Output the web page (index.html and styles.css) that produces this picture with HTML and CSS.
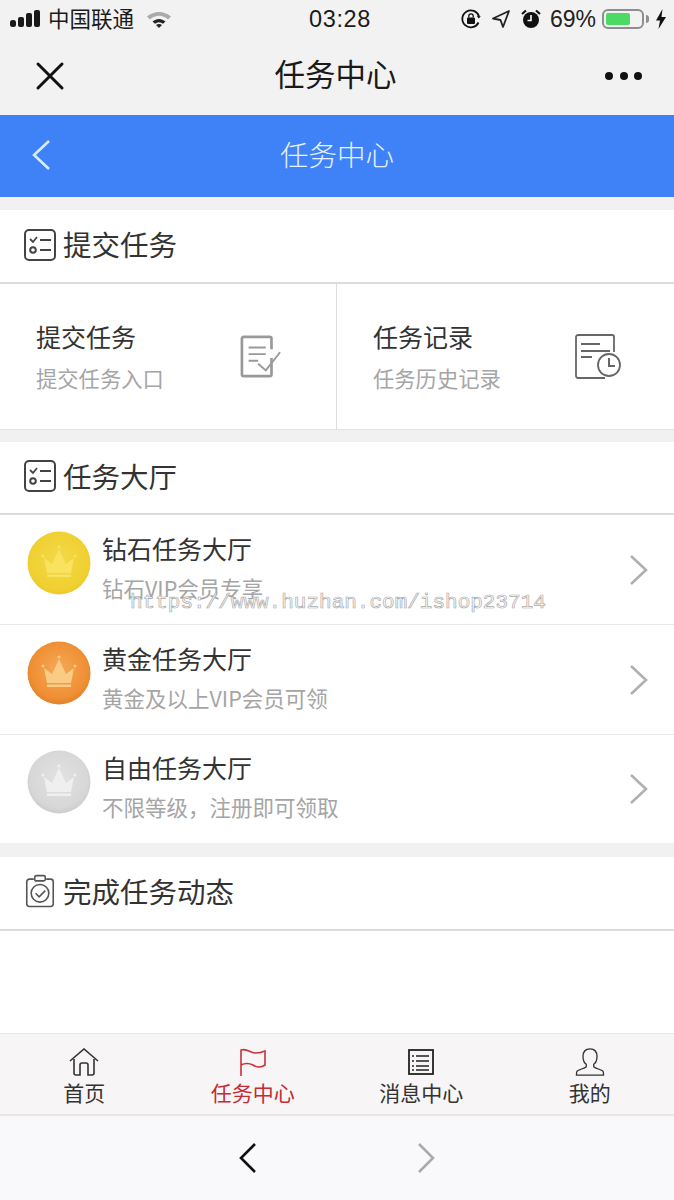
FILE: index.html
```html
<!DOCTYPE html>
<html lang="zh-CN">
<head>
<meta charset="utf-8">
<title>任务中心</title>
<link rel="stylesheet" href="styles.css">
</head>
<body>
<div class="page">
  <header class="chrome">
    <div class="status">
      <div class="status-left">
        <svg class="signal" width="31" height="18" viewBox="0 0 31 18"><rect x="0" y="10" width="6" height="7" rx="2.500"/><rect x="8" y="7" width="6" height="10" rx="2"/><rect x="16" y="3" width="6" height="14" rx="2"/><rect x="24" y="0" width="6" height="17" rx="2"/></svg>
        <span class="carrier">中国联通</span>
        <svg class="wifi" width="26" height="18" viewBox="0 0 26 18"><path d="M1 6.500C8 .5 18 .5 25 6.500l-3 3C16.500 4.500 9.500 4.500 4 9.500z" fill="#aaa"/><path d="M6.500 11.500c4-3.500 9-3.500 13 0l-2.500 2.300c-2.500-2-5.500-2-8 0z" fill="#222"/><path d="M10 15c1.800-1.300 4.200-1.300 6 0l-3 3z" fill="#222"/></svg>
      </div>
      <span class="time">03:28</span>
      <div class="status-right">
        <svg width="22" height="22" viewBox="0 0 22 22" fill="none" stroke="#111" stroke-width="1.800"><path d="M18.500 14.500A8.500 8.500 0 1 1 19 8.500"/><path d="M20.800 8.200l-2 2.300-2-2.400z" fill="#111" stroke="none"/><rect x="7" y="9.500" width="8" height="6.500" rx="1" fill="#111" stroke="none"/><path d="M8.800 9.500V8a2.200 2.200 0 0 1 4.400 0v1.500" stroke-width="1.300"/></svg>
        <svg class="gap-a" width="20" height="20" viewBox="0 0 20 20" fill="none" stroke="#222" stroke-width="1.800" stroke-linejoin="round"><path d="M18 2 2 9.500l7.500 1.500L12 18z"/></svg>
        <svg class="gap-b" width="22" height="22" viewBox="0 0 22 22"><circle cx="11" cy="12" r="8" fill="#111"/><path d="M11 7v5.500H7.500" fill="none" stroke="#fff" stroke-width="1.600"/><path d="M2 6l4-3.500M20 6l-4-3.500" stroke="#111" stroke-width="2.200"/></svg>
        <span class="battery-pct">69%</span>
        <span class="battery"><span class="battery-fill"></span></span>
        <span class="battery-cap"></span>
        <svg width="12" height="20" viewBox="0 0 12 20"><path d="M7.500 0 1 11.500h4L3.500 20 11 8H6.500z" fill="#111"/></svg>
      </div>
    </div>
    <div class="wx-nav">
      <svg class="wx-close" width="30" height="30" viewBox="0 0 30 30"><path d="M3 3l24 24M27 3 3 27" stroke="#111" stroke-width="3" stroke-linecap="round"/></svg>
      <span class="wx-title">任务中心</span>
      <div class="wx-more"><i></i><i></i><i></i></div>
    </div>
  </header>

  <div class="appbar">
    <svg class="appbar-back" width="22" height="32" viewBox="0 0 22 32"><path d="M19 2 4 16l15 14" fill="none" stroke="#d8ecff" stroke-width="2.600"/></svg>
    <span class="appbar-title">任务中心</span>
  </div>

  <section class="section section-a">
    <h2 class="section-head">
      <svg class="head-icon" width="34" height="34" viewBox="0 0 34 34" fill="none" stroke="#444" stroke-width="2"><rect x="2" y="2" width="30" height="30" rx="4"/><path d="M7 11l3 3 4-5" stroke-width="1.800"/><circle cx="10" cy="22" r="2.800"/><path d="M17 12h11M17 22h11"/></svg>
      <span>提交任务</span>
    </h2>
    <div class="cards">
      <a class="card">
        <div class="card-text"><div class="card-title">提交任务</div><div class="card-sub">提交任务入口</div></div>
        <svg class="card-icon" width="42" height="44" viewBox="0 0 44 46" fill="none" stroke="#999" stroke-width="2.800"><path d="M33 24v17a2 2 0 0 1-2 2H4a2 2 0 0 1-2-2V4a2 2 0 0 1 2-2h27a2 2 0 0 1 2 2v11"/><path d="M9 13h18M9 20h18M9 27h10" stroke-width="2"/><path d="M19 30l8 7 15-19" stroke-width="2"/></svg>
      </a>
      <a class="card card-right">
        <div class="card-text"><div class="card-title">任务记录</div><div class="card-sub">任务历史记录</div></div>
        <svg class="card-icon" width="46" height="46" viewBox="0 0 46 46" fill="none" stroke="#666" stroke-width="1.800"><path d="M30 44H3a2 2 0 0 1-2-2V3a2 2 0 0 1 2-2h34a2 2 0 0 1 2 2v15"/><path d="M6 10h19M6 17h29M6 23h11" stroke-width="2"/><circle cx="34" cy="31" r="11"/><path d="M34 24v8h6" stroke-width="2"/></svg>
      </a>
    </div>
  </section>

  <section class="section section-b">
    <h2 class="section-head section-head-tight">
      <svg class="head-icon" width="34" height="34" viewBox="0 0 34 34" fill="none" stroke="#444" stroke-width="2"><rect x="2" y="2" width="30" height="30" rx="4"/><path d="M7 11l3 3 4-5" stroke-width="1.800"/><circle cx="10" cy="22" r="2.800"/><path d="M17 12h11M17 22h11"/></svg>
      <span>任务大厅</span>
    </h2>
    <a class="row">
      <svg class="coin" width="64" height="64" viewBox="0 0 64 64"><defs><radialGradient id="g1" cx=".5" cy=".45" r=".6"><stop offset="0" stop-color="#f3d94a"/><stop offset=".8" stop-color="#f0d030"/><stop offset="1" stop-color="#e8c324"/></radialGradient></defs><circle cx="32" cy="32" r="31.500" fill="url(#g1)"/><path d="M17 27l8 6 7-15 7 15 8-6-3 15H20z" fill="#f8e25e"/><circle cx="32" cy="16" r="1.600" fill="#f8e25e"/><circle cx="16" cy="25" r="1.500" fill="#f8e25e"/><circle cx="48" cy="25" r="1.500" fill="#f8e25e"/><rect x="20" y="43.500" width="24" height="2.500" fill="#f8e25e"/></svg>
      <div class="row-text"><div class="row-title">钻石任务大厅</div><div class="row-sub">钻石VIP会员专享</div></div>
      <svg class="chev" width="22" height="32" viewBox="0 0 22 32"><path d="M3 2l15 14L3 30" fill="none" stroke="#b0b0b0" stroke-width="2.600"/></svg>
    </a>
    <a class="row">
      <svg class="coin" width="64" height="64" viewBox="0 0 64 64"><defs><radialGradient id="g2" cx=".5" cy=".45" r=".6"><stop offset="0" stop-color="#f5a95a"/><stop offset=".75" stop-color="#ef8f33"/><stop offset="1" stop-color="#dd7a20"/></radialGradient></defs><circle cx="32" cy="32" r="31.500" fill="url(#g2)"/><path d="M17 27l8 6 7-15 7 15 8-6-3 15H20z" fill="#f9cb85"/><circle cx="32" cy="16" r="1.600" fill="#f9cb85"/><circle cx="16" cy="25" r="1.500" fill="#f9cb85"/><circle cx="48" cy="25" r="1.500" fill="#f9cb85"/><rect x="20" y="43.500" width="24" height="2.500" fill="#f9cb85"/></svg>
      <div class="row-text"><div class="row-title">黄金任务大厅</div><div class="row-sub">黄金及以上VIP会员可领</div></div>
      <svg class="chev" width="22" height="32" viewBox="0 0 22 32"><path d="M3 2l15 14L3 30" fill="none" stroke="#b0b0b0" stroke-width="2.600"/></svg>
    </a>
    <a class="row row-last">
      <svg class="coin" width="64" height="64" viewBox="0 0 64 64"><defs><radialGradient id="g3" cx=".5" cy=".45" r=".6"><stop offset="0" stop-color="#e2e2e2"/><stop offset=".75" stop-color="#d7d7d7"/><stop offset="1" stop-color="#c8c8c8"/></radialGradient></defs><circle cx="32" cy="32" r="31.500" fill="url(#g3)"/><path d="M17 27l8 6 7-15 7 15 8-6-3 15H20z" fill="#efefef"/><circle cx="32" cy="16" r="1.600" fill="#efefef"/><circle cx="16" cy="25" r="1.500" fill="#efefef"/><circle cx="48" cy="25" r="1.500" fill="#efefef"/><rect x="20" y="43.500" width="24" height="2.500" fill="#efefef"/></svg>
      <div class="row-text"><div class="row-title">自由任务大厅</div><div class="row-sub">不限等级，注册即可领取</div></div>
      <svg class="chev" width="22" height="32" viewBox="0 0 22 32"><path d="M3 2l15 14L3 30" fill="none" stroke="#b0b0b0" stroke-width="2.600"/></svg>
    </a>
  </section>

  <section class="section section-fill">
    <h2 class="section-head">
      <svg class="head-icon head-icon-clip" width="30" height="35" viewBox="0 0 34 38" fill="none" stroke="#555" stroke-width="1.800"><path d="M10 5H5a3 3 0 0 0-3 3v25a3 3 0 0 0 3 3h24a3 3 0 0 0 3-3V8a3 3 0 0 0-3-3h-5"/><rect x="11" y="1" width="12" height="6" rx="2"/><circle cx="17" cy="21" r="10"/><path d="M12 21l4 4 7-7"/></svg>
      <span>完成任务动态</span>
    </h2>
  </section>

  <nav class="tabbar">
    <a class="tab">
      <svg width="30" height="28" viewBox="0 0 30 28" fill="none" stroke="#333" stroke-width="1.600"><path d="M1 13 15 1l14 12"/><path d="M5 11v14a2 2 0 0 0 2 2h4V17a2 2 0 0 1 2-2h4a2 2 0 0 1 2 2v10h4a2 2 0 0 0 2-2V11"/></svg>
      <span>首页</span>
    </a>
    <a class="tab tab-active">
      <svg width="30" height="28" viewBox="0 0 30 28" fill="none" stroke="#c8323c" stroke-width="1.600"><path d="M3 28V2c6-2 9 3 14 3 4 0 8-1 10-2v14c-4 3-9 2-12 0-4-2-8-2-12 0"/></svg>
      <span>任务中心</span>
    </a>
    <a class="tab">
      <svg width="28" height="28" viewBox="0 0 28 28" fill="none" stroke="#222" stroke-width="1.800"><rect x="2" y="2" width="24" height="24"/><path d="M9 8h13M9 13h13M9 18h13M9 22h13" stroke-width="1.500"/><path d="M5 8h2M5 13h2M5 18h2M5 22h2" stroke-width="1.500"/></svg>
      <span>消息中心</span>
    </a>
    <a class="tab">
      <svg width="30" height="30" viewBox="0 0 30 30" fill="none" stroke="#333" stroke-width="1.400"><path d="M15 1c-5 0-7.500 3.500-7.500 8 0 4 1.500 7 3.500 8.500v2.500c-2 2-8 3-10 5-.5.700-.5 2-.5 4h29c0-2 0-3.300-.5-4-2-2-8-3-10-5v-2.500c2-1.500 3.500-4.500 3.500-8.500 0-4.500-2.500-8-7.500-8z"/></svg>
      <span>我的</span>
    </a>
  </nav>

  <footer class="wx-bottom">
    <svg width="20" height="32" viewBox="0 0 20 32"><path d="M17 2 3 16l14 14" fill="none" stroke="#111" stroke-width="2.600"/></svg>
    <svg width="20" height="32" viewBox="0 0 20 32"><path d="M3 2l14 14L3 30" fill="none" stroke="#aaa" stroke-width="2.600"/></svg>
  </footer>

  <div class="watermark">https://www.huzhan.com/ishop23714</div>
</div>
</body>
</html>
```
FILE: styles.css
```css
* { box-sizing: border-box; }
html, body { margin: 0; padding: 0; }
body {
  background: #fff;
  color: #333;
  font-family: "Noto Sans CJK SC", "Liberation Sans", sans-serif;
}
.page {
  position: relative;
  width: 674px;
  height: 1200px;
  overflow: hidden;
  display: flex;
  flex-direction: column;
  background: #f1f1f1;
}
.chrome { height: 115px; background: #f2f2f2; flex: none; }
.status {
  height: 38px;
  padding: 0 7px 0 10px;
  display: grid;
  grid-template-columns: 1fr auto 1fr;
  align-items: center;
  color: #1a1a1a;
}
.status-left { display: flex; align-items: center; }
.signal { fill: #1a1a1a; margin-right: 7px; }
.carrier { font-size: 21.500px; line-height: 1; margin-top: -2px; }
.wifi { margin-left: 12px; }
.time { font: 23.500px/1 "Liberation Sans", sans-serif; letter-spacing: .6px; margin: 1px 0 0 3px; }
.status-right { display: flex; align-items: center; justify-content: flex-end; }
.gap-a { margin-left: 9px; }
.gap-b { margin-left: 9px; }
.battery-pct { font: 23px/1 "Liberation Sans", sans-serif; margin-left: 8px; color: #222; }
.battery {
  margin-left: 6px;
  width: 42px;
  height: 20px;
  border: 2px solid #8e8e8e;
  border-radius: 6px;
  padding: 2px;
  display: block;
}
.battery-fill { display: block; height: 100%; width: 70%; background: #4cd964; border-radius: 2px; }
.battery-cap { width: 3px; height: 8px; background: #8e8e8e; margin: 0 6px 0 2px; border-radius: 0 3px 3px 0; }
.wx-nav {
  height: 77px;
  display: grid;
  grid-template-columns: 1fr auto 1fr;
  align-items: center;
  padding: 0 35px 6px 32px;
}
.wx-close { display: block; margin: 4px 0 0 3px; }
.wx-title { font-size: 30.500px; line-height: 1; color: #1a1a1a; }
.wx-more { display: flex; justify-content: flex-end; gap: 6.500px; margin: 4px -3px 0 0; }
.wx-more i { width: 8px; height: 8px; border-radius: 50%; background: #111; }

.appbar {
  flex: none;
  height: 82px;
  background: #3f82f7;
  display: grid;
  grid-template-columns: 1fr auto 1fr;
  align-items: center;
  padding: 0 30px 4px;
}
.appbar-title { font-size: 28.500px; line-height: 1; color: #e4f3ff; font-weight: 300; }
.appbar-back { display: block; margin-top: 2px; }

.section { flex: none; background: #fff; }
.section-a { margin-top: 13px; }
.section-b { margin-top: 12px; }
.section-fill { flex: 1; margin-top: 14px; }
.section-head {
  margin: 0;
  height: 74px;
  display: flex;
  align-items: center;
  padding: 0 0 3px 23px;
  border-bottom: 2px solid #dcdcdc;
  font-size: 28.500px;
  font-weight: 400;
  line-height: 1;
  color: #333;
}
.section-head-tight { height: 73px; }
.section-head span { margin-left: 6px; }
.head-icon { display: block; flex: none; }
.head-icon-clip { margin: 0 2px 0 2px; }

.cards {
  display: grid;
  grid-template-columns: 337px 337px;
  height: 146px;
  border-bottom: 1px solid #e3e3e3;
}
.card {
  display: flex;
  align-items: center;
  justify-content: space-between;
  padding: 0 54px 0 36px;
  border-right: 1px solid #dedede;
}
.card-right { border-right: 0; padding-right: 53px; }
.card-title { font-size: 25px; line-height: 32px; color: #333; }
.card-sub { font-size: 21.300px; line-height: 28px; margin-top: 12px; color: #a5a5a5; }
.card-text { margin-top: -2px; }
.card-icon { display: block; margin-top: 1px; }

.row {
  height: 110px;
  display: flex;
  align-items: center;
  padding: 0 24px 0 27px;
  border-bottom: 1px solid #eaeaea;
}
.row-last { border-bottom: 0; height: 108px; }
.coin { display: block; flex: none; margin-top: -14px; }
.row-text { flex: 1; margin: -6px 0 0 11px; }
.row-title { font-size: 25px; line-height: 32px; color: #333; }
.row-sub { font-size: 21.500px; line-height: 28px; margin-top: 10px; color: #a5a5a5; }
.chev { display: block; flex: none; }

.tabbar {
  flex: none;
  height: 83px;
  background: #f7f5f5;
  border-top: 1px solid #e8e8e8;
  border-bottom: 2px solid #e8e6e6;
  display: grid;
  grid-template-columns: repeat(4, 168.500px);
}
.tab {
  display: flex;
  flex-direction: column;
  align-items: center;
  padding-top: 14px;
  font-size: 21px;
  line-height: 28px;
  color: #333;
}
.tab svg { display: block; height: 28px; margin-bottom: 2px; }
.tab-active { color: #c62a33; }

.wx-bottom {
  flex: none;
  height: 84px;
  background: #f9f9fb;
  display: flex;
  align-items: center;
  justify-content: center;
  gap: 158px;
}
.wx-bottom svg { display: block; }

.watermark {
  position: absolute;
  left: 130px;
  top: 588px;
  font: 21px/30px "Liberation Mono", monospace;
  color: #fff;
  -webkit-text-stroke: .7px #aaa;
  white-space: nowrap;
}
```
